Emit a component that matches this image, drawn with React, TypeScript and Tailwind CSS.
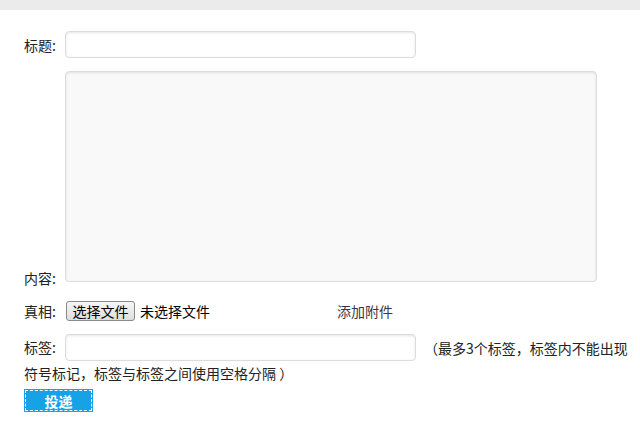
import React, { useState } from 'react';

const font = "font-['Microsoft_YaHei','Noto_Sans_CJK_SC',sans-serif]";

const App: React.FC = () => {
  const [title, setTitle] = useState('');
  const [content, setContent] = useState('');
  const [tags, setTags] = useState('');

  const fieldClass =
    'border border-[#dcdcdc] rounded-[4px] shadow-[inset_0_1px_3px_rgba(0,0,0,0.1)] outline-none px-2 text-sm';

  return (
    <div className={`min-h-[435px] bg-white text-[#222] text-sm ${font}`}>
      {/* Top strip */}
      <div className="h-[10px] bg-[#ebebeb]" />

      <form className="pl-[24px] pr-[10px] pt-[21px]" onSubmit={(e) => e.preventDefault()}>
        {/* Title */}
        <div className="flex items-center h-[27px]">
          <label className="w-[41px] leading-5">标题:</label>
          <input
            type="text"
            value={title}
            onChange={(e) => setTitle(e.target.value)}
            className={`w-[351px] h-[27px] bg-white ${fieldClass}`}
          />
        </div>

        {/* Content */}
        <div className="flex items-end mt-[13px]">
          <label className="w-[41px] leading-5 mb-[-6px]">内容:</label>
          <textarea
            value={content}
            onChange={(e) => setContent(e.target.value)}
            className={`w-[532px] h-[211px] bg-[#f9f9f9] resize-none py-1 ${fieldClass}`}
          />
        </div>

        {/* Attachment */}
        <div className="flex items-center h-[20px] mt-[19px]">
          <label className="w-[42px] leading-5">真相:</label>
          <div className="w-[271px] flex items-center">
            <button
              type="button"
              className="w-[69px] h-[20px] border border-[#8a8a8a] rounded-[3px] bg-gradient-to-b from-[#f6f6f6] to-[#dedede] text-sm leading-none text-black"
            >
              选择文件
            </button>
            <span className="ml-[5px] text-black">未选择文件</span>
          </div>
          <span className="text-[#3d3548] cursor-pointer">添加附件</span>
        </div>

        {/* Tags */}
        <div className="mt-[13px] leading-[20px]">
          <div className="flex items-center">
            <label className="w-[41px] leading-[27px]">标签:</label>
            <input
              type="text"
              value={tags}
              onChange={(e) => setTags(e.target.value)}
              className={`w-[351px] h-[27px] bg-white ${fieldClass}`}
            />
            <span className="ml-[8px]">（最多3个标签，标签内不能出现</span>
          </div>
          <div className="mt-[2px]">符号标记，标签与标签之间使用空格分隔 ）</div>
        </div>

        {/* Submit */}
        <button
          type="submit"
          className="mt-[6px] block w-[69px] h-[23px] bg-[#17a2e6] p-[1px]"
        >
          <span className="flex items-center justify-center w-full h-full border border-dashed border-white text-white font-bold text-sm leading-none">
            投递
          </span>
        </button>
      </form>
    </div>
  );
};

export default App;
